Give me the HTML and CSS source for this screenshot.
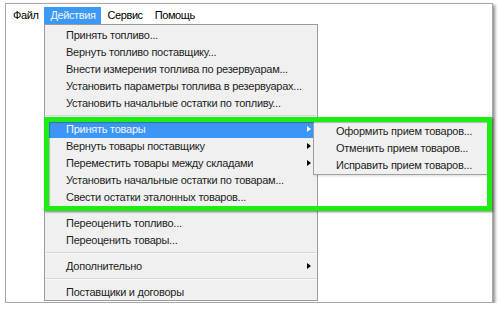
FILE: index.html
```html
<!DOCTYPE html>
<html lang="ru">
<head>
    <meta charset="UTF-8">
    <title>Действия</title>
    <link rel="stylesheet" href="styles.css">
</head>
<body>
    <div class="window">
        <div class="menubar">
            <span class="menubar-item">Файл</span>
            <span class="menubar-item active">Действия</span>
            <span class="menubar-item">Сервис</span>
            <span class="menubar-item">Помощь</span>
        </div>

        <div class="dropdown">
            <div class="menu-item">Принять топливо...</div>
            <div class="menu-item">Вернуть топливо поставщику...</div>
            <div class="menu-item">Внести измерения топлива по резервуарам...</div>
            <div class="menu-item">Установить параметры топлива в резервуарах...</div>
            <div class="menu-item">Установить начальные остатки по топливу...</div>
            <div class="separator"></div>
            <div class="menu-item selected has-sub">Принять товары</div>
            <div class="menu-item has-sub">Вернуть товары поставщику</div>
            <div class="menu-item has-sub">Переместить товары между складами</div>
            <div class="menu-item">Установить начальные остатки по товарам...</div>
            <div class="menu-item">Свести остатки эталонных товаров...</div>
            <div class="separator"></div>
            <div class="menu-item">Переоценить топливо...</div>
            <div class="menu-item">Переоценить товары...</div>
            <div class="separator"></div>
            <div class="menu-item has-sub">Дополнительно</div>
            <div class="separator"></div>
            <div class="menu-item">Поставщики и договоры</div>
        </div>

        <div class="submenu">
            <div class="menu-item">Оформить прием товаров...</div>
            <div class="menu-item">Отменить прием товаров...</div>
            <div class="menu-item">Исправить прием товаров...</div>
        </div>

        <!-- рамка-выделение поверх меню -->
        <div class="highlight-frame"></div>
    </div>
</body>
</html>
```

FILE: styles.css
```css
* {
    margin: 0;
    padding: 0;
    box-sizing: border-box;
}

body {
    background: #ffffff;
    font-family: "Liberation Sans", Arial, sans-serif;
    font-size: 11px;
    letter-spacing: -0.25px;
    color: #1e1e1e;
}

.window {
    position: relative;
    margin: 3px 0 0 5px;
    width: 488px;
    height: 300px;
    background: #ffffff;
    border: 1px solid #a8a8a8;
    box-shadow: 2px 2px 3px rgba(0, 0, 0, 0.45);
}

.menubar {
    display: flex;
    padding: 3px 0 0 1px;
    height: 20px;
}

.menubar-item {
    padding: 0 6px;
    height: 17px;
    line-height: 17px;
    color: #000000;
    letter-spacing: -0.4px;
}

.menubar-item.active {
    background: #3b99f4;
    color: #eef4ff;
}

.dropdown {
    position: absolute;
    left: 38px;
    top: 20px;
    width: 274px;
    height: 277px;
    padding-top: 2px;
    background: #f0f0f0;
    border: 1px solid #9c9c9c;
}

.menu-item {
    position: relative;
    margin: 0 2px;
    height: 17px;
    line-height: 17px;
    padding-left: 19px;
    white-space: nowrap;
}

.menu-item.has-sub::after {
    content: "";
    position: absolute;
    right: 4px;
    top: 5px;
    border-left: 4px solid #000000;
    border-top: 3.5px solid transparent;
    border-bottom: 3.5px solid transparent;
}

.menu-item.selected {
    background: linear-gradient(#3f93ef, #3a98f8);
    color: #f2f6ff;
}

.menu-item.selected::after {
    border-left-color: #ffffff;
}

.separator {
    height: 2px;
    margin: 3px 1px 4px 1px;
    background: #d6d6d6;
    border-bottom: 1px solid #fafafa;
}

.submenu {
    position: absolute;
    left: 307px;
    top: 117px;
    width: 176px;
    height: 54px;
    padding-top: 1px;
    background: #f0f0f0;
    border: 1px solid #a0a0a0;
    box-shadow: 1px 1px 2px rgba(0, 0, 0, 0.15);
}

.submenu .menu-item {
    padding-left: 20px;
}

.highlight-frame {
    position: absolute;
    left: 38px;
    top: 113px;
    width: 448px;
    height: 94px;
    border: 5px solid #1eec12;
    box-shadow: 1px 1px 2px rgba(0, 0, 0, 0.5), inset 1px 1px 1px rgba(0, 0, 0, 0.25);
}
```
